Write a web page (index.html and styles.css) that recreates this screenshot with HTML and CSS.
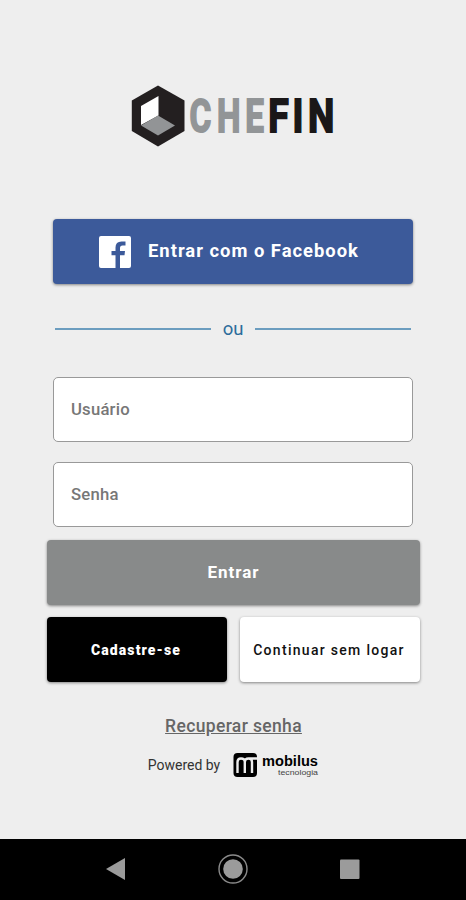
FILE: index.html
```html
<!DOCTYPE html>
<html lang="pt-BR">
<head>
    <meta charset="UTF-8">
    <meta name="viewport" content="width=device-width, initial-scale=1.0">
    <title>Chefin - Login</title>
    <link rel="stylesheet" href="styles.css">
</head>
<body>

<div class="container">
    <!-- Logo -->
    <svg class="logo" width="204" height="62" viewBox="0 0 204 62">
        <polygon points="27,0.5 53.5,15.5 53.5,46 27,61.5 0.8,46 0.8,15.5" fill="#231f20"/>
        <polygon points="10,21 27.5,11 27.5,30.5 10,40" fill="#fff"/>
        <polygon points="10,40.5 27,30.5 44,40.5 27,50.5" fill="#929496"/>
        <g transform="scale(0.73 1)">
            <text class="logo-text" x="80.200 117.800 156.500" y="47.500" fill="#929597" stroke="#929597">CHE</text>
        </g>
        <g transform="scale(0.82 1)">
            <text class="logo-text" x="167.500 197 215.900" y="47.500" fill="#1a1718" stroke="#1a1718">FIN</text>
        </g>
    </svg>

    <form id="loginForm">
        <!-- Facebook -->
        <button type="button" class="facebook">
            <svg width="32" height="32" viewBox="0 0 32 32">
                <path d="M2 0h28a2 2 0 0 1 2 2v28a2 2 0 0 1-2 2h-9V19.200h4.500L26 15h-5v-3q0-2.500 2.500-2.500H26.500V5.500h-4q-6 0-6 6V15h-4v4.200h4V32H2a2 2 0 0 1-2-2V2a2 2 0 0 1 2-2z" fill="#fff"/>
            </svg>
            <span>Entrar com o Facebook</span>
        </button>

        <div class="divider"><span>ou</span></div>

        <!-- Login -->
        <input type="text" name="usuario" placeholder="Usuário" aria-label="Usuário">
        <input type="password" name="senha" placeholder="Senha" aria-label="Senha">
        <button type="submit" class="entrar">Entrar</button>

        <div class="row">
            <button type="button" class="cadastro">Cadastre-se</button>
            <button type="button" class="continuar">Continuar sem logar</button>
        </div>
    </form>

    <a class="recuperar" href="#">Recuperar senha</a>

    <div class="powered">
        <span>Powered by</span>
        <svg width="86" height="26" viewBox="0 0 86 26">
            <rect x="0.5" y="1" width="23.500" height="24" rx="4" fill="#000"/>
            <path d="M4.500 21V10Q4.500 6.500 8 6.500Q11.800 6.500 11.800 10V21M11.800 10Q11.800 6.500 15.500 6.500Q19 6.500 19 10V21M15.500 6.500H25" fill="none" stroke="#eee" stroke-width="2.400"/>
            <text class="mobilus" x="29" y="14" textLength="56" lengthAdjust="spacingAndGlyphs">mobilus</text>
            <text class="tecnologia" x="45" y="22.500" textLength="40" lengthAdjust="spacingAndGlyphs">tecnologia</text>
        </svg>
    </div>
</div>

<!-- Android navigation bar -->
<div class="navbar">
    <svg width="30" height="30" viewBox="0 0 30 30"><path d="M5 15L24 4v22z" fill="#9b9b9b"/></svg>
    <svg width="30" height="30" viewBox="0 0 30 30">
        <circle cx="15" cy="15" r="14" fill="none" stroke="#8b8b8b" stroke-width="1.400"/>
        <circle cx="15" cy="15" r="9.800" fill="#9b9b9b"/>
    </svg>
    <svg width="30" height="30" viewBox="0 0 30 30"><rect x="5" y="5.500" width="19.500" height="19.500" rx="1" fill="#9b9b9b"/></svg>
</div>

</body>
</html>
```

FILE: styles.css
```css
* {
    box-sizing: border-box;
}
body {
    font-family: Roboto, "Liberation Sans", sans-serif;
    background-color: #eee;
    margin: 0;
    height: 900px;
    display: flex;
    flex-direction: column;
}
.container {
    flex: 1;
    display: flex;
    flex-direction: column;
    align-items: center;
    padding: 85px 46px 0 47px;
}
.logo {
    margin: 0 1px 72px 0;
    overflow: visible;
}
.logo-text {
    font-size: 45.5px;
    font-weight: bold;
    stroke-width: 1.8px;
}
form {
    width: 100%;
    display: flex;
    flex-direction: column;
}
button {
    font-family: inherit;
    font-weight: bold;
    border: none;
    border-radius: 4px;
    height: 65px;
    padding: 0;
    color: #fff;
    cursor: pointer;
    box-shadow: 0 1px 3px rgba(0, 0, 0, 0.45);
}
.facebook {
    display: flex;
    align-items: center;
    gap: 17px;
    padding: 0 0 0 46px;
    margin: 0 7px 0 6px;
    background-color: #3c5a9a;
    font-size: 18.4px;
    letter-spacing: 1px;
}
.facebook span {
    padding-bottom: 2px;
}
.divider {
    display: flex;
    align-items: center;
    gap: 12px;
    height: 24px;
    margin: 33px 9px 36px 8px;
    color: #2c6c9b;
    font-size: 18.5px;
}
.divider span {
    padding-bottom: 1px;
}
.divider::before, .divider::after {
    content: '';
    flex: 1;
    height: 2px;
    background-color: #6c9dbf;
}
input {
    height: 65px;
    margin: 0 7px 20px 6px;
    padding: 0 17px;
    border: 1px solid #999;
    border-radius: 5px;
    background-color: #fff;
    font-family: inherit;
    font-size: 16.7px;
    font-weight: 500;
    letter-spacing: 0.2px;
}
input::placeholder {
    color: #777;
}
input[type="password"] {
    margin-bottom: 13px;
}
.entrar {
    padding-bottom: 2px;
    background-color: #888a8a;
    font-size: 17px;
    letter-spacing: 1px;
}
.row {
    display: flex;
    gap: 13px;
    margin-top: 12px;
}
.row button {
    flex: 1;
    padding-right: 2px;
    font-size: 14px;
}
.row .cadastro {
    background-color: #000;
    font-weight: 900;
    letter-spacing: 1.1px;
}
.row .continuar {
    background-color: #fff;
    color: #111;
    font-weight: 500;
    letter-spacing: 1.3px;
}
.recuperar {
    margin-top: 34px;
    line-height: 20px;
    font-size: 17.5px;
    font-weight: 500;
    letter-spacing: 0.35px;
    color: #666;
}
.powered {
    display: flex;
    align-items: center;
    gap: 13px;
    margin-top: 16px;
    font-size: 14px;
    color: #333;
}
.mobilus {
    font-family: "Liberation Sans", Arial, sans-serif;
    font-size: 14px;
    font-weight: bold;
}
.tecnologia {
    font-family: "Liberation Sans", Arial, sans-serif;
    font-size: 8px;
    fill: #444;
}
.navbar {
    display: flex;
    justify-content: center;
    align-items: center;
    gap: 87px;
    height: 61px;
    padding-bottom: 1px;
    background-color: #000;
}
```
